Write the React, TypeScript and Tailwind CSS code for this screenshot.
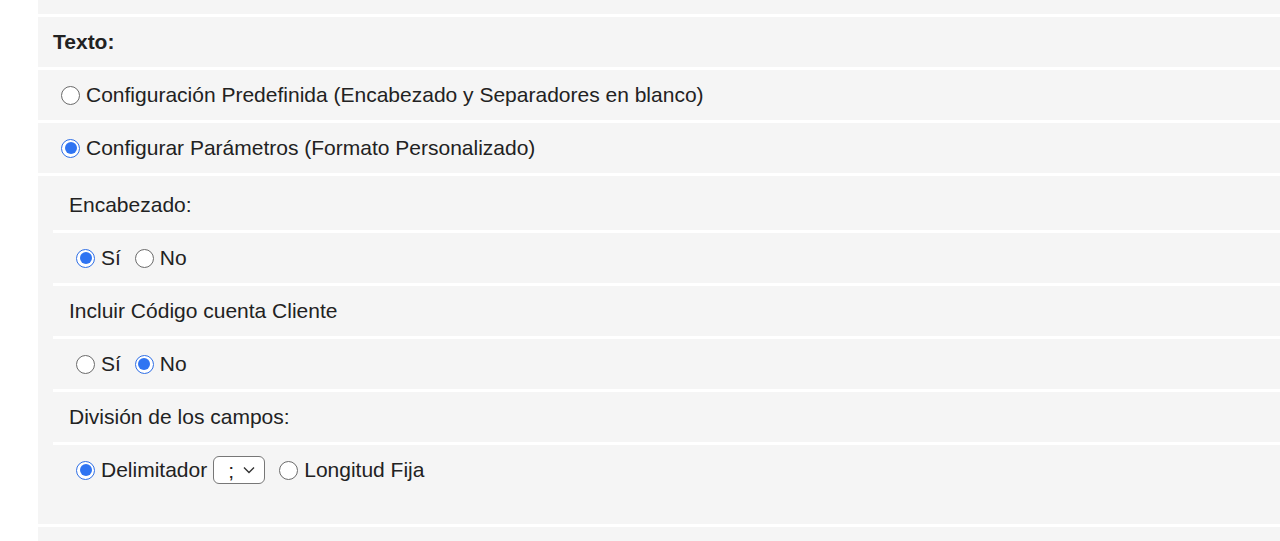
import React from "react"

function Radio({ checked }: { checked?: boolean }) {
  return (
    <span
      className={
        checked
          ? "w-[19px] h-[19px] rounded-full border-[1.5px] border-[#2f6fe6] bg-white flex items-center justify-center shrink-0"
          : "w-[19px] h-[19px] rounded-full border border-[#6b6b6b] bg-white shrink-0"
      }
    >
      {checked && <span className="w-[12px] h-[12px] rounded-full bg-[#2f74f2]" />}
    </span>
  )
}

function Option({ checked, label, className = "" }: { checked?: boolean; label: string; className?: string }) {
  return (
    <label className={"flex items-center gap-[6px] " + className}>
      <Radio checked={checked} />
      <span>{label}</span>
    </label>
  )
}

function Row({ children, className = "" }: { children: React.ReactNode; className?: string }) {
  return <div className={"flex items-center bg-[#f5f5f5] " + className}>{children}</div>
}

export default function App() {
  return (
    <div
      className="min-h-screen bg-white pl-[38px] text-[21px] text-[#222]"
      style={{ fontFamily: '"Liberation Sans", Arial, sans-serif' }}
    >
      <div className="flex flex-col gap-[3px]">
        <div className="h-[14px] bg-[#f5f5f5]" />
        <Row className="h-[50px] px-[15px] font-bold">Texto:</Row>
        <Row className="h-[50px] pl-[23px]">
          <Option label="Configuración Predefinida (Encabezado y Separadores en blanco)" />
        </Row>
        <Row className="h-[50px] pl-[23px]">
          <Option checked label="Configurar Parámetros (Formato Personalizado)" />
        </Row>

        <div className="bg-[#f5f5f5] pl-[15px] pt-[4px] pb-[29px] flex flex-col">
          <Row className="h-[53px] pl-[16px] border-b-[3px] border-white">Encabezado:</Row>
          <Row className="h-[53px] pl-[23px] border-b-[3px] border-white">
            <Option checked label="Sí" />
            <Option label="No" className="ml-[14px]" />
          </Row>
          <Row className="h-[53px] pl-[16px] border-b-[3px] border-white">Incluir Código cuenta Cliente</Row>
          <Row className="h-[53px] pl-[23px] border-b-[3px] border-white">
            <Option label="Sí" />
            <Option checked label="No" className="ml-[14px]" />
          </Row>
          <Row className="h-[53px] pl-[16px] border-b-[3px] border-white">División de los campos:</Row>
          <Row className="h-[50px] pl-[23px]">
            <Option checked label="Delimitador" />
            <span className="ml-[6px] w-[52px] h-[28px] rounded-[6px] border border-[#777] bg-white flex items-center justify-between pl-[14px] pr-[9px]">
              <span className="leading-none">;</span>
              <svg width="12" height="8" viewBox="0 0 12 8" fill="none">
                <path d="M1 1.5 L6 6.5 L11 1.5" stroke="#333" strokeWidth="1.4" />
              </svg>
            </span>
            <Option label="Longitud Fija" className="ml-[14px]" />
          </Row>
        </div>
        <div className="h-[20px] bg-[#f5f5f5]" />
      </div>
    </div>
  )
}
